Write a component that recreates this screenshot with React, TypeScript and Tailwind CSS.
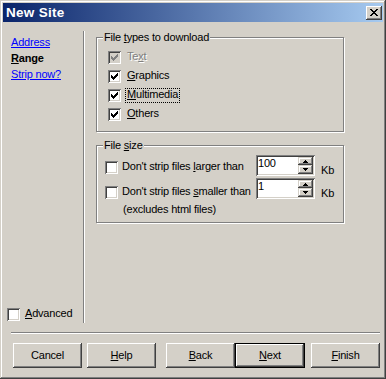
const sunken =
  "shadow-[inset_1px_1px_0_#808080,inset_-1px_-1px_0_#ffffff,inset_2px_2px_0_#404040,inset_-2px_-2px_0_#d4d0c8]";
const raised =
  "shadow-[inset_-1px_-1px_0_#404040,inset_1px_1px_0_#ffffff,inset_-2px_-2px_0_#808080,inset_2px_2px_0_#d4d0c8]";
const scrollRaised =
  "shadow-[inset_-1px_-1px_0_#404040,inset_1px_1px_0_#d4d0c8,inset_-2px_-2px_0_#808080,inset_2px_2px_0_#ffffff]";
const etched = "border border-[#808080] shadow-[1px_1px_0_#ffffff,inset_1px_1px_0_#ffffff]";

function Check({ checked = false, disabled = false }: { checked?: boolean; disabled?: boolean }) {
  const cols = [
    [3, 5], [4, 6], [5, 7], [6, 6], [7, 5], [8, 4], [9, 3],
  ];
  return (
    <span className={`block shrink-0 w-[13px] h-[13px] ${disabled ? "bg-[#d4d0c8]" : "bg-white"} ${sunken}`}>
      {checked && (
        <svg width="13" height="13" viewBox="0 0 13 13" shapeRendering="crispEdges" className="block">
          {cols.map(([x, y]) => (
            <rect key={x} x={x} y={y} width="1" height="3" fill={disabled ? "#808080" : "#000000"} />
          ))}
        </svg>
      )}
    </span>
  );
}

function Arrow({ up }: { up?: boolean }) {
  const rows = up
    ? [[2, 0, 1], [1, 1, 3], [0, 2, 5]]
    : [[0, 0, 5], [1, 1, 3], [2, 2, 1]];
  return (
    <svg width="5" height="3" viewBox="0 0 5 3" shapeRendering="crispEdges" className="block">
      {rows.map(([x, y, w]) => (
        <rect key={y} x={x} y={y} width={w} height="1" fill="#000" />
      ))}
    </svg>
  );
}

function Spin({ value }: { value: string }) {
  return (
    <div className={`shrink-0 w-[59px] h-[21px] bg-white p-[2px] flex ${sunken}`}>
      <span className="flex-1 leading-[13px]">{value}</span>
      <div className="w-[15px] flex flex-col">
        <div className={`h-[8px] bg-[#d4d0c8] flex items-center justify-center ${scrollRaised}`}>
          <Arrow up />
        </div>
        <div className={`h-[9px] bg-[#d4d0c8] flex items-center justify-center ${scrollRaised}`}>
          <Arrow />
        </div>
      </div>
    </div>
  );
}

function CloseGlyph() {
  const rows = [
    [[0, 2], [6, 2]],
    [[1, 2], [5, 2]],
    [[2, 4]],
    [[3, 2]],
    [[2, 4]],
    [[1, 2], [5, 2]],
    [[0, 2], [6, 2]],
  ];
  return (
    <svg width="8" height="7" viewBox="0 0 8 7" shapeRendering="crispEdges" className="block">
      {rows.map((segs, y) =>
        segs.map(([x, w]) => <rect key={`${y}-${x}`} x={x} y={y} width={w} height="1" fill="#000" />)
      )}
    </svg>
  );
}

function TypeRow({
  checked,
  disabled,
  focused,
  children,
}: {
  checked?: boolean;
  disabled?: boolean;
  focused?: boolean;
  children: React.ReactNode;
}) {
  return (
    <div className="flex items-start h-[13px]">
      <Check checked={checked} disabled={disabled} />
      <span
        className={`ml-[4px] -mt-[1px] px-[1px] pb-[2px] leading-[11px] border ${
          focused ? "border-dotted border-black" : "border-transparent"
        } ${disabled ? "text-[#808080] [text-shadow:1px_1px_0_#ffffff]" : ""}`}
      >
        {children}
      </span>
    </div>
  );
}

function Btn({ children, focused }: { children: React.ReactNode; focused?: boolean }) {
  return (
    <button
      className={`h-[25px] bg-[#d4d0c8] flex items-center justify-center leading-none ${raised} ${
        focused ? "w-[70px] border border-black" : "w-[69px]"
      }`}
    >
      {children}
    </button>
  );
}

export default function App() {
  return (
    <div className="w-[386px] h-[379px] bg-[#d4d0c8] p-[3px] flex flex-col font-['Liberation_Sans',Arial,sans-serif] text-[11px] tracking-[-0.2px] text-black shadow-[inset_-1px_-1px_0_#404040,inset_1px_1px_0_#d4d0c8,inset_-2px_-2px_0_#808080,inset_2px_2px_0_#ffffff]">
      {/* caption */}
      <div className="h-[19px] shrink-0 flex items-center pl-[3px] pr-[1px] bg-linear-to-r/srgb from-[#0a246a] to-[#a6caf0]">
        <span className="text-white font-bold text-[13.5px] tracking-[0.3px] leading-none">New Site</span>
        <button className={`ml-auto w-[16px] h-[14px] bg-[#d4d0c8] flex items-center justify-center ${raised}`}>
          <CloseGlyph />
        </button>
      </div>

      <div className="flex h-[301px] shrink-0">
        {/* left steps */}
        <nav className="w-[80px] flex flex-col items-start pl-[8px] pt-[12px] pb-[2px] leading-[16px]">
          <a className="text-[#0000ff] underline cursor-pointer">Address</a>
          <span className="font-bold">
            <span className="underline">R</span>ange
          </span>
          <a className="text-[#0000ff] underline cursor-pointer">Strip now?</a>
          <div className="mt-auto -ml-[4px] flex items-start">
            <Check />
            <span className="ml-[5px] -mt-[1px] leading-[13px]">
              <span className="underline">A</span>dvanced
            </span>
          </div>
        </nav>
        <div className="w-[2px] mt-[9px] border-l border-[#808080] bg-white" />

        {/* page */}
        <div className="flex-1 pl-[11px] pt-[15px]">
          <div className={`relative w-[248px] h-[95px] pl-[11px] pt-[13px] flex flex-col gap-[6px] ${etched}`}>
            <span className="absolute -top-[7px] left-[6px] bg-[#d4d0c8] px-[1px] leading-[13px]">
              File <span className="underline">t</span>ypes to download
            </span>
            <TypeRow checked disabled>
              Te<span className="underline">x</span>t
            </TypeRow>
            <TypeRow checked>
              <span className="underline">G</span>raphics
            </TypeRow>
            <TypeRow checked focused>
              <span className="underline">M</span>ultimedia
            </TypeRow>
            <TypeRow checked>
              <span className="underline">O</span>thers
            </TypeRow>
          </div>

          <div className={`relative mt-[13px] w-[248px] h-[78px] pl-[8px] pt-[9px] flex flex-col ${etched}`}>
            <span className="absolute -top-[7px] left-[6px] bg-[#d4d0c8] px-[1px] leading-[13px]">
              File <span className="underline">s</span>ize
            </span>
            <div className="flex items-start h-[21px]">
              <span className="mt-[6px]">
                <Check />
              </span>
              <span className="ml-[4px] w-[134px] mt-[5px] leading-[13px] whitespace-nowrap">
                Don't strip files <span className="underline">l</span>arger than
              </span>
              <Spin value="100" />
              <span className="ml-[6px] mt-[9px] leading-[13px]">Kb</span>
            </div>
            <div className="flex items-start h-[21px] mt-[2px]">
              <span className="mt-[8px]">
                <Check />
              </span>
              <span className="ml-[4px] w-[134px] mt-[7px] leading-[13px] whitespace-nowrap">
                Don't strip files <span className="underline">s</span>maller than
              </span>
              <Spin value="1" />
              <span className="ml-[6px] mt-[9px] leading-[13px]">Kb</span>
            </div>
            <span className="mt-[4px] ml-[18px] leading-[13px]">(excludes html files)</span>
          </div>
        </div>
      </div>

      <div className="ml-[8px] mr-[3px] mt-[9px] h-[2px] shrink-0 border-t border-[#808080] bg-white" />

      <div className="flex mt-[9px] pl-[10px] shrink-0">
        <Btn>Cancel</Btn>
        <div className="ml-[5px]">
          <Btn>
            <span className="underline">H</span>elp
          </Btn>
        </div>
        <div className="ml-[10px]">
          <Btn>
            <span className="underline">B</span>ack
          </Btn>
        </div>
        <Btn focused>
          <span className="underline">N</span>ext
        </Btn>
        <div className="ml-[6px]">
          <Btn>
            <span className="underline">F</span>inish
          </Btn>
        </div>
      </div>
    </div>
  );
}
